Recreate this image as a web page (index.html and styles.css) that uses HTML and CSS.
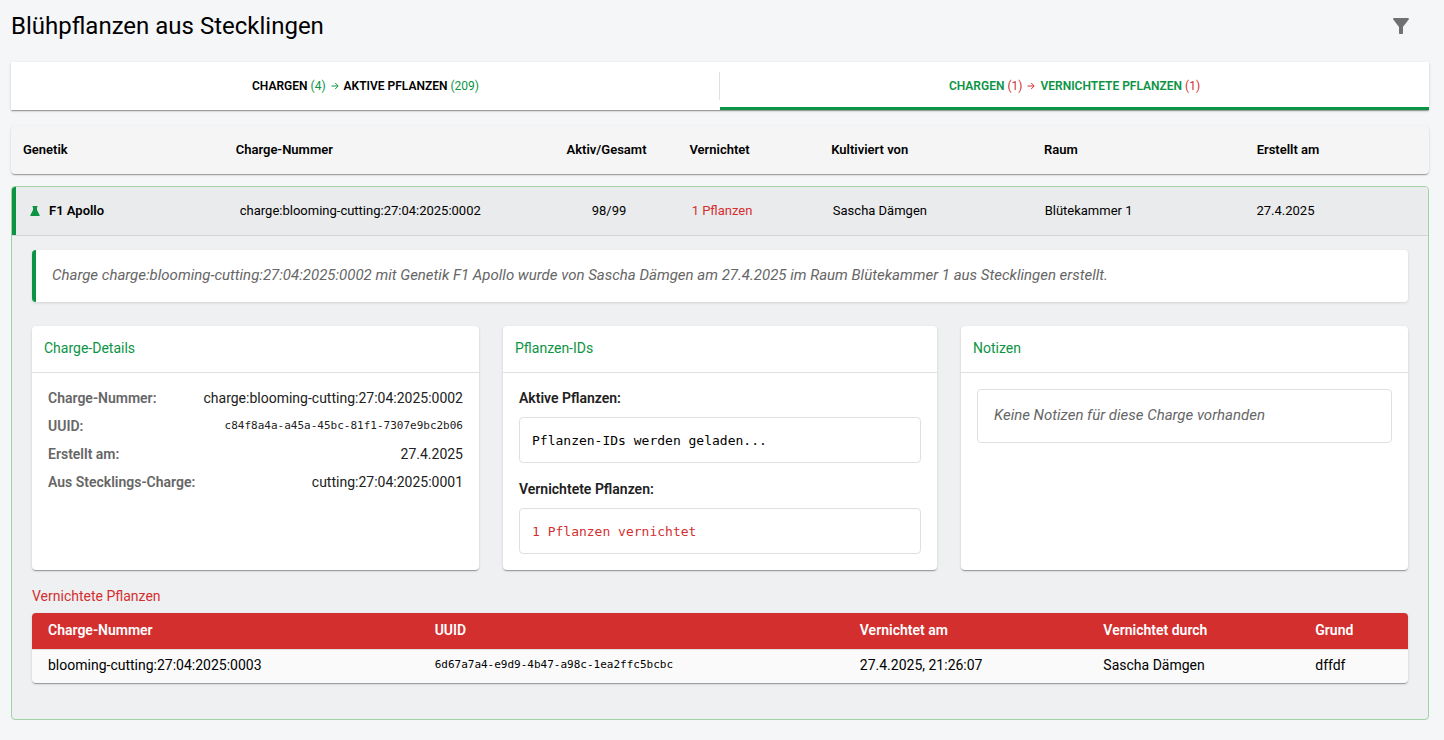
FILE: index.html
```
<!DOCTYPE html>
<html lang="de">
<head>
<meta charset="utf-8">
<meta name="viewport" content="width=device-width, initial-scale=1">
<title>Blühpflanzen aus Stecklingen</title>
<link rel="stylesheet" href="styles.css">
</head>
<body>
<main class="page">
  <header class="page-header">
    <h1 class="page-title">Blühpflanzen aus Stecklingen</h1>
    <button class="icon-button" type="button" aria-label="Filter">
      <svg width="24" height="24" viewBox="0 0 24 24" fill="currentColor" aria-hidden="true"><path d="M4.25 5.61C6.27 8.2 10 13 10 13v6c0 .55.45 1 1 1h2c.55 0 1-.45 1-1v-6s3.72-4.8 5.74-7.39A.998.998 0 0 0 18.95 4H5.04c-.83 0-1.3.95-.79 1.61z"/></svg>
    </button>
  </header>

  <div class="tabs" role="tablist">
    <button class="tab" type="button" role="tab" aria-selected="false">
      <span class="tab-label">Chargen</span>
      <span class="count count-active">(4)</span>
      <svg class="arrow count-active" width="12" height="12" viewBox="0 0 12 12" fill="none" stroke="currentColor" aria-hidden="true"><path d="M2.500 6h6.500M6.200 3 9.200 6 6.200 9"/></svg>
      <span class="tab-label">Aktive Pflanzen</span>
      <span class="count count-active">(209)</span>
    </button>
    <button class="tab tab-selected" type="button" role="tab" aria-selected="true">
      <span class="tab-label">Chargen</span>
      <span class="count count-destroyed">(1)</span>
      <svg class="arrow count-destroyed" width="12" height="12" viewBox="0 0 12 12" fill="none" stroke="currentColor" aria-hidden="true"><path d="M2.500 6h6.500M6.200 3 9.200 6 6.200 9"/></svg>
      <span class="tab-label">Vernichtete Pflanzen</span>
      <span class="count count-destroyed">(1)</span>
    </button>
  </div>

  <table class="batches">
    <thead class="batches-head">
      <tr class="batch-grid">
        <th>Genetik</th>
        <th>Charge-Nummer</th>
        <th class="centered">Aktiv/Gesamt</th>
        <th>Vernichtet</th>
        <th>Kultiviert von</th>
        <th>Raum</th>
        <th>Erstellt am</th>
      </tr>
    </thead>
    <tbody class="batch">
      <tr class="batch-grid batch-row">
        <td class="genetics">
          <svg width="14" height="12" viewBox="0 0 14 12" fill="currentColor" aria-hidden="true"><path d="M4.500 1h5v1.200H9V5l2.700 5.300q.3.700-.5.700H2.800q-.8 0-.5-.7L5 5V2.200h-.5z"/></svg>
          F1 Apollo
        </td>
        <td>charge:blooming-cutting:27:04:2025:0002</td>
        <td class="centered">98/99</td>
        <td class="danger">1 Pflanzen</td>
        <td>Sascha Dämgen</td>
        <td>Blütekammer 1</td>
        <td>27.4.2025</td>
      </tr>
      <tr class="detail-row">
        <td class="detail" colspan="7">
          <p class="summary">Charge charge:blooming-cutting:27:04:2025:0002 mit Genetik F1 Apollo wurde von Sascha Dämgen am 27.4.2025 im Raum Blütekammer 1 aus Stecklingen erstellt.</p>

          <div class="cards">
            <section class="card">
              <h2 class="card-title">Charge-Details</h2>
              <dl class="card-body facts">
                <div class="fact"><dt>Charge-Nummer:</dt><dd>charge:blooming-cutting:27:04:2025:0002</dd></div>
                <div class="fact"><dt>UUID:</dt><dd class="uuid">c84f8a4a-a45a-45bc-81f1-7307e9bc2b06</dd></div>
                <div class="fact"><dt>Erstellt am:</dt><dd>27.4.2025</dd></div>
                <div class="fact"><dt>Aus Stecklings-Charge:</dt><dd>cutting:27:04:2025:0001</dd></div>
              </dl>
            </section>

            <section class="card">
              <h2 class="card-title">Pflanzen-IDs</h2>
              <div class="card-body plant-ids">
                <div class="id-group">
                  <h3 class="id-title">Aktive Pflanzen:</h3>
                  <div class="id-box">Pflanzen-IDs werden geladen...</div>
                </div>
                <div class="id-group">
                  <h3 class="id-title">Vernichtete Pflanzen:</h3>
                  <div class="id-box danger">1 Pflanzen vernichtet</div>
                </div>
              </div>
            </section>

            <section class="card">
              <h2 class="card-title">Notizen</h2>
              <div class="card-body">
                <p class="notes-empty">Keine Notizen für diese Charge vorhanden</p>
              </div>
            </section>
          </div>

          <h2 class="destroyed-title">Vernichtete Pflanzen</h2>
          <table class="destroyed">
            <colgroup>
              <col class="col-number"><col class="col-uuid"><col class="col-date"><col class="col-user"><col class="col-reason">
            </colgroup>
            <thead>
              <tr><th>Charge-Nummer</th><th>UUID</th><th>Vernichtet am</th><th>Vernichtet durch</th><th>Grund</th></tr>
            </thead>
            <tbody>
              <tr><td>blooming-cutting:27:04:2025:0003</td><td class="uuid">6d67a7a4-e9d9-4b47-a98c-1ea2ffc5bcbc</td><td>27.4.2025, 21:26:07</td><td>Sascha Dämgen</td><td>dffdf</td></tr>
            </tbody>
          </table>
        </td>
      </tr>
    </tbody>
  </table>
</main>
</body>
</html>
```
FILE: styles.css
```
:root {
  --green: #0b9444;
  --red: #d32f2f;
  --line: #e0e0e0;
  --shadow: 0 2px 1px -1px rgba(0, 0, 0, .2), 0 1px 1px rgba(0, 0, 0, .14), 0 1px 3px rgba(0, 0, 0, .12);
}

* { box-sizing: border-box; }

body {
  margin: 0;
  background: #f5f6f8;
  color: #000;
  font: 14px/20px Roboto, "Liberation Sans", sans-serif;
}

h1, h2, h3, p, dl, dd { margin: 0; }

.page { padding: 0 15px 20px 11px; }

.page-header {
  display: flex;
  align-items: center;
  justify-content: space-between;
  padding: 6px 8px 16px 0;
}

.page-title { font-size: 24px; line-height: 32px; font-weight: 400; }

.icon-button {
  display: flex;
  padding: 8px;
  border: 0;
  background: none;
  color: #6f7072;
}

/* Tabs */
.tabs {
  display: grid;
  grid-template-columns: 1fr 1fr;
  background: #fff;
  box-shadow: var(--shadow);
}

.tab {
  position: relative;
  display: flex;
  align-items: center;
  justify-content: center;
  gap: 3px;
  height: 48px;
  padding: 0;
  border: 0;
  border-bottom: 3px solid transparent;
  border-top: 3px solid transparent;
  background: none;
  color: #000;
  font: inherit;
  font-size: 12px;
}

.tab + .tab::before {
  content: "";
  position: absolute;
  left: -1px;
  top: 7px;
  height: 28px;
  border-left: 1px solid var(--line);
}

.tab-selected { color: var(--green); border-bottom-color: var(--green); }
.tab-label { font-weight: 600; text-transform: uppercase; }
.count-active { color: var(--green); }
.count-destroyed { color: var(--red); }

/* Batches */
.batches,
.batches-head,
.batch,
.detail-row,
.detail { display: block; }

.batches { margin-top: 16px; font-size: 13px; }

.batches-head {
  background: #f5f5f5;
  border-radius: 4px;
  box-shadow: var(--shadow);
}

.batch-grid {
  display: grid;
  grid-template-columns: 15fr 22fr 10fr 10fr 15fr 15fr 13fr;
  align-items: center;
  min-height: 48px;
}

.batch-grid > * { padding: 0 12px; text-align: left; }
.batch-grid > .centered { text-align: center; }
.batch-grid > th { font-weight: 600; }

.batch {
  margin-top: 12px;
  overflow: hidden;
  border: 1px solid #a0d2a4;
  border-radius: 4px;
  background: #eff0f2;
}

.batch-row {
  border-left: 4px solid var(--green);
  background: #eaebed;
}

.genetics { display: flex; align-items: center; gap: 7px; font-weight: 600; }
.genetics svg { color: var(--green); }
.danger { color: var(--red); }

.detail {
  padding: 14px 20px 36px;
  border-top: 1px solid #d4d5d7;
  font-size: 14px;
}

.summary {
  padding: 15px 16px 17px;
  border-left: 4px solid var(--green);
  border-radius: 4px;
  background: #fff;
  box-shadow: 0 1px 3px rgba(0, 0, 0, .12);
  color: #666;
  font-size: 15px;
  font-style: italic;
}

/* Detail cards */
.cards {
  display: grid;
  grid-template-columns: 103fr 100fr 103fr;
  gap: 24px;
  margin-top: 24px;
}

.card { border-radius: 4px; background: #fff; box-shadow: var(--shadow); }

.card-title {
  padding: 12px 12px 14px;
  border-bottom: 1px solid var(--line);
  color: var(--green);
  font-size: 14px;
  font-weight: 400;
}

.card-body { padding: 16px; color: #212121; }

.facts,
.plant-ids,
.id-group { display: flex; flex-direction: column; }

.facts,
.id-group { gap: 10px; line-height: 18px; }
.plant-ids { gap: 17px; }

.fact { display: flex; justify-content: space-between; }
.fact dt { color: #666; font-weight: 600; }

.uuid { font-family: "DejaVu Sans Mono", monospace; font-size: 11px; }

.id-title { font-size: 14px; font-weight: 600; }

.id-box {
  padding: 13px 12px 11px;
  border: 1px solid var(--line);
  border-radius: 4px;
  font-family: "DejaVu Sans Mono", monospace;
  font-size: 13px;
  line-height: 20px;
}

.id-box:not(.danger) { color: #000; }

.notes-empty {
  padding: 15px 16px 17px;
  border: 1px solid var(--line);
  border-radius: 4px;
  color: #666;
  font-size: 15px;
  font-style: italic;
}

/* Destroyed plants */
.destroyed-title {
  margin: 16px 0 7px;
  color: var(--red);
  font-size: 14px;
  font-weight: 400;
}

.destroyed {
  width: 100%;
  table-layout: fixed;
  border-spacing: 0;
  overflow: hidden;
  border-radius: 4px;
  background: #fafafa;
  box-shadow: var(--shadow);
}

.destroyed th,
.destroyed td { padding: 7px 16px 9px; text-align: left; }
.destroyed th { background: var(--red); color: #fff; font-weight: 600; }
.destroyed td { padding: 5px 16px 8px; border-top: 1px solid var(--line); }

.col-number { width: 28.1%; }
.col-uuid { width: 30.9%; }
.col-date { width: 17.7%; }
.col-user { width: 15.4%; }
.col-reason { width: 7.9%; }
```
